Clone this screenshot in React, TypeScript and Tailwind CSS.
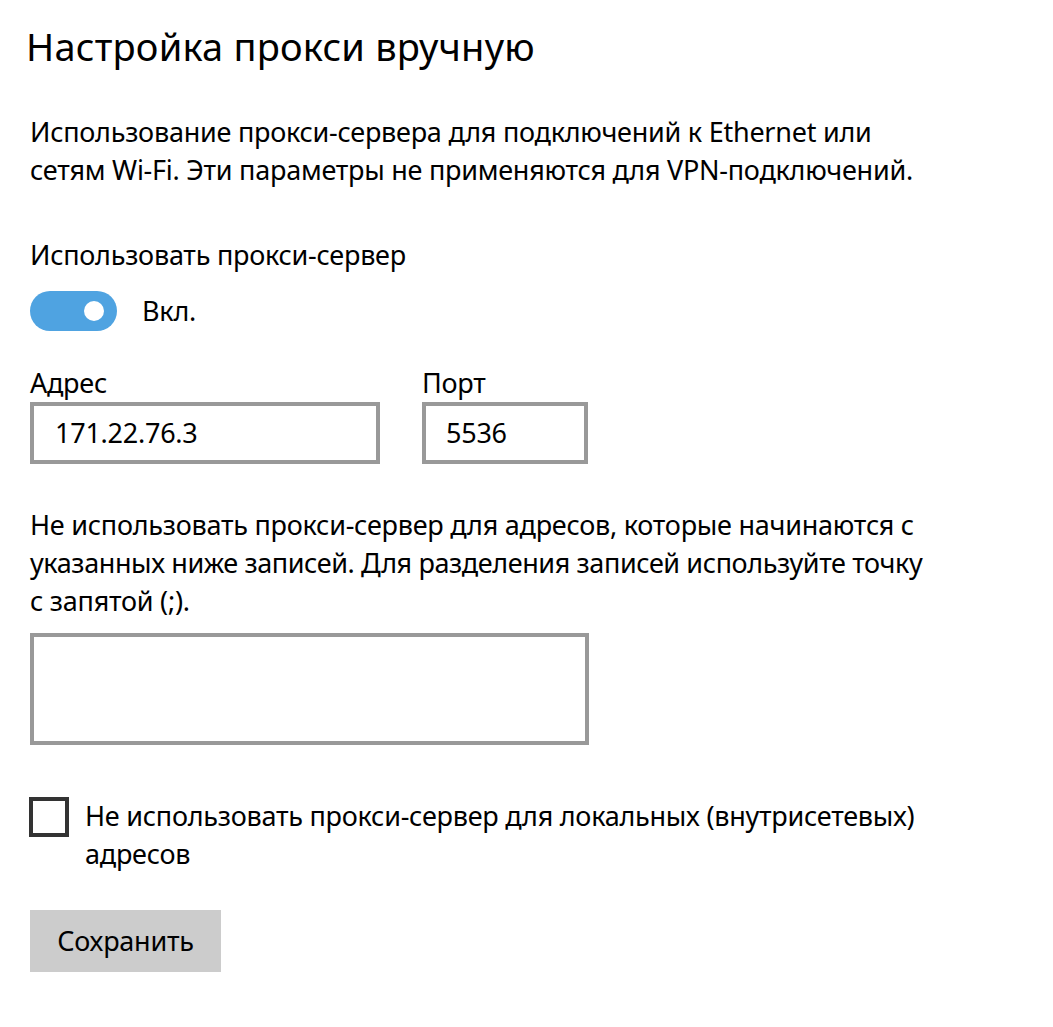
import React from "react";

export default function App() {
  return (
    <div
      className="w-[1053px] h-[1027px] bg-white text-black pl-[30px] overflow-hidden text-[27px] leading-[38px] tracking-[-0.25px]"
      style={{ fontFamily: '"Noto Sans", "Open Sans", sans-serif' }}
    >
      <h1 className="text-[38px] leading-[50px] mt-[21px] -ml-[4px] font-normal tracking-[0.2px]">
        Настройка прокси вручную
      </h1>
      <p className="mt-[42px] whitespace-nowrap">
        Использование прокси-сервера для подключений к Ethernet или
        <br />
        сетям Wi-Fi. Эти параметры не применяются для VPN-подключений.
      </p>
      <div className="mt-[47px]">Использовать прокси-сервер</div>
      <div className="flex items-center mt-[17px] gap-[25px]">
        <div className="w-[87px] h-[40px] rounded-full bg-[#4fa3e1] flex items-center justify-end pr-[13px]">
          <div className="w-[20px] h-[20px] rounded-full bg-white" />
        </div>
        <span>Вкл.</span>
      </div>
      <div className="flex mt-[33px] gap-[42px]">
        <div className="flex flex-col">
          <span>Адрес</span>
          <div className="w-[350px] h-[62px] border-[4px] border-[#999999] flex items-center pl-[21px]">
            171.22.76.3
          </div>
        </div>
        <div className="flex flex-col">
          <span>Порт</span>
          <div className="w-[166px] h-[62px] border-[4px] border-[#999999] flex items-center pl-[20px]">
            5536
          </div>
        </div>
      </div>
      <p className="mt-[42px] whitespace-nowrap">
        Не использовать прокси-сервер для адресов, которые начинаются с
        <br />
        <span className="tracking-[-0.4px]">указанных ниже записей. Для разделения записей используйте точку</span>
        <br />с запятой (;).
      </p>
      <div className="w-[559px] h-[112px] border-[4px] border-[#999999] mt-[13px]" />
      <div className="flex mt-[52px] gap-[16px] -ml-[1px]">
        <div className="w-[40px] h-[40px] border-[4px] border-[#333333] shrink-0" />
        <span className="whitespace-nowrap">
          Не использовать прокси-сервер для локальных (внутрисетевых)
          <br />
          адресов
        </span>
      </div>
      <button className="mt-[37px] w-[191px] h-[62px] bg-[#cccccc] flex items-center justify-center">
        Сохранить
      </button>
    </div>
  );
}
